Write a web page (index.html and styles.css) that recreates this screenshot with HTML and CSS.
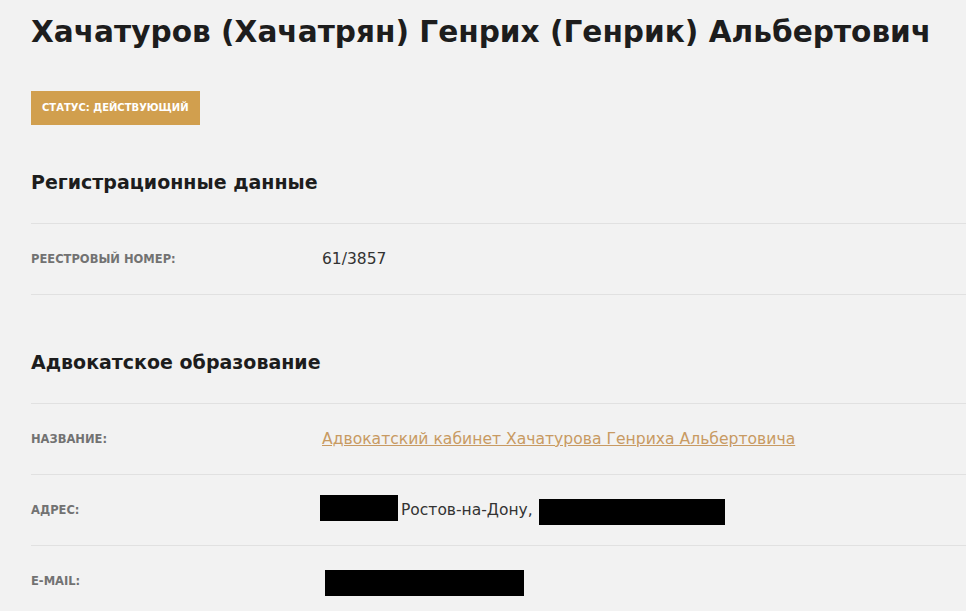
FILE: index.html
```html
<!DOCTYPE html>
<html lang="ru">
<head>
  <meta charset="UTF-8" />
  <title>Хачатуров Генрих Альбертович</title>
  <link rel="stylesheet" href="styles.css">
</head>
<body>

<main class="lawyer">
  <h1 class="lawyer-name">Хачатуров (Хачатрян) Генрих (Генрик) Альбертович</h1>

  <div class="status">Статус: действующий</div>

  <section class="block">
    <h2>Регистрационные данные</h2>
    <div class="row">
      <div class="label">Реестровый номер:</div>
      <div class="value">61/3857</div>
    </div>
  </section>

  <section class="block">
    <h2>Адвокатское образование</h2>
    <div class="row">
      <div class="label">Название:</div>
      <div class="value"><a href="#">Адвокатский кабинет Хачатурова Генриха Альбертовича</a></div>
    </div>
    <div class="row">
      <div class="label">Адрес:</div>
      <div class="value address">
        <span class="hidden h1"></span>
        <span>Ростов-на-Дону,</span>
        <span class="hidden h2"></span>
      </div>
    </div>
    <div class="row">
      <div class="label">E-mail:</div>
      <div class="value"><span class="hidden h3"></span></div>
    </div>
  </section>
</main>

</body>
</html>
```

FILE: styles.css
```css
body {
  font-family: 'DejaVu Sans', 'Open Sans', sans-serif;
  background: #f2f2f2;
  margin: 0; padding: 0;
  color: #222;
  overflow: hidden;
}
.lawyer {
  padding: 12px 0 0 31px;
}
.lawyer-name {
  font-size: 29.6px;
  font-weight: bold;
  line-height: 40px;
  margin: 0 0 39px;
  color: #1d1d1d;
  white-space: nowrap;
}
.status {
  display: inline-block;
  background: #d19f4e;
  color: white;
  font-size: 10px;
  font-weight: bold;
  text-transform: uppercase;
  padding: 0 11px;
  line-height: 34px;
  height: 34px;
}
.block h2 {
  font-size: 19px;
  font-weight: bold;
  margin: 0;
  padding: 45px 0 29px;
  line-height: 24px;
  color: #1d1d1d;
  border-bottom: 1px solid #e1e1e1;
}
.block + .block h2 {
  padding-top: 55px;
}
.row {
  display: flex;
  align-items: center;
  height: 70px;
  border-bottom: 1px solid #e1e1e1;
}
.label {
  width: 291px;
  flex: none;
  font-size: 11.5px;
  font-weight: bold;
  text-transform: uppercase;
  color: #727272;
}
.value {
  font-size: 15.5px;
  color: #333;
}
.value a {
  color: #c89a62;
  font-size: 15.6px;
}
.address {
  display: flex;
  align-items: center;
  gap: 3px;
  margin-left: -2px;
}
.hidden {
  display: inline-block;
  background: #000;
}
.h1 { width: 78px; height: 26px; margin-top: -4px; }
.h2 { width: 186px; height: 26px; margin-top: 4px; margin-left: 3px; }
.h3 { width: 199px; height: 26px; margin-left: 3px; margin-top: 3px; vertical-align: middle; }
```
